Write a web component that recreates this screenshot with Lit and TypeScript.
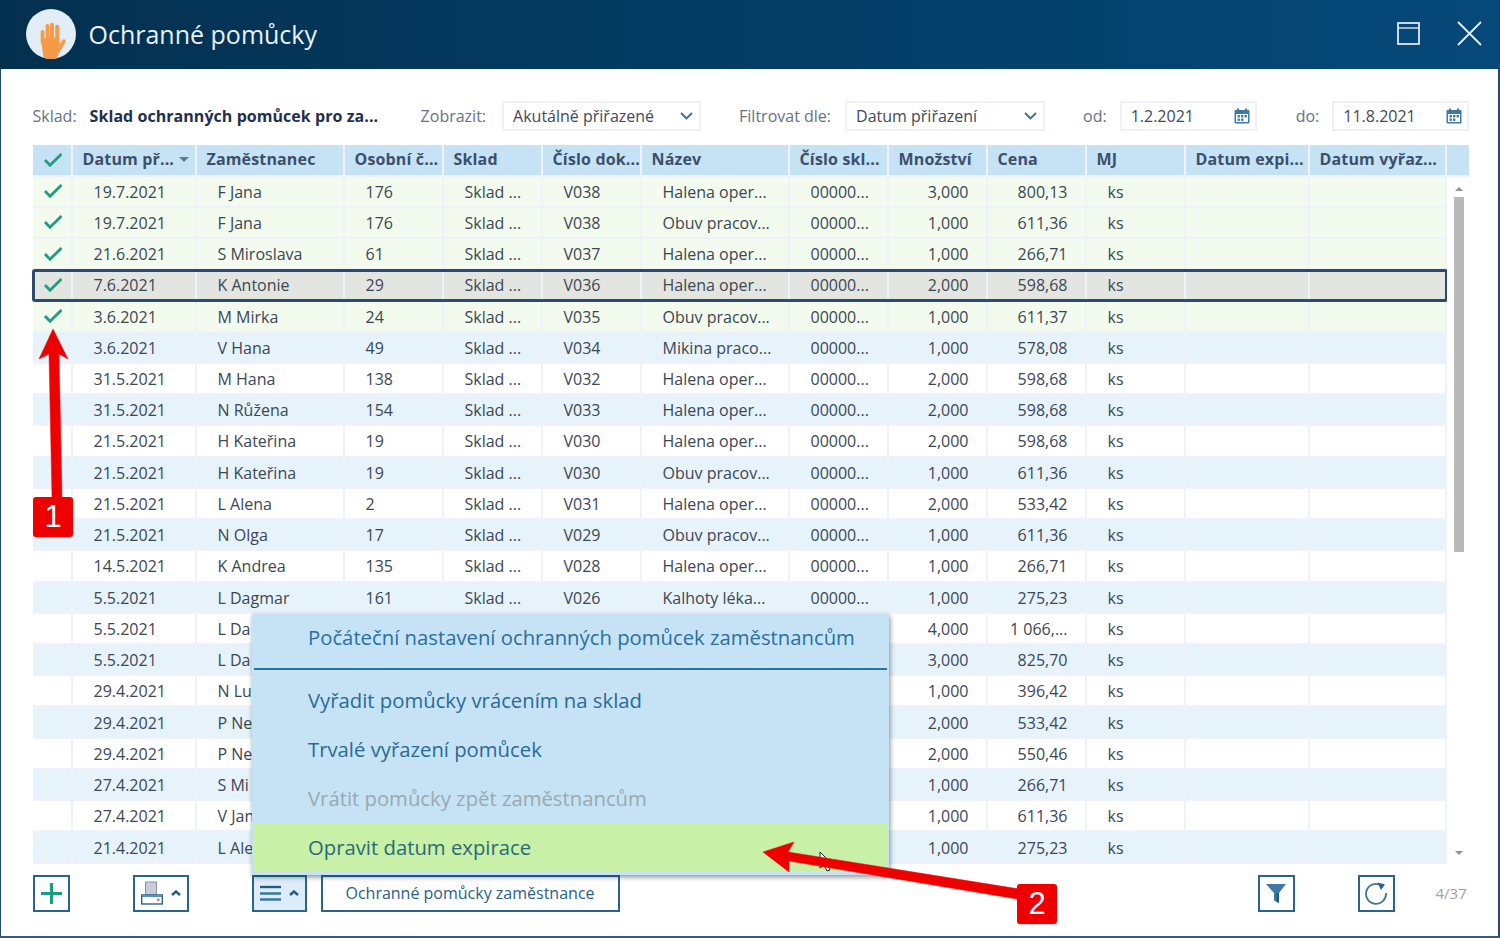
import { LitElement, html, css, svg } from "lit";
import { customElement } from "lit/decorators.js";

type Row = [string, string, string, string, string, string, string, string, string];
const rows: Row[] = [
  ["19.7.2021","F Jana","176","V038","Halena oper...","00000...","3,000","800,13","g"],
  ["19.7.2021","F Jana","176","V038","Obuv pracov...","00000...","1,000","611,36","g"],
  ["21.6.2021","S Miroslava","61","V037","Halena oper...","00000...","1,000","266,71","g"],
  ["7.6.2021","K Antonie","29","V036","Halena oper...","00000...","2,000","598,68","s"],
  ["3.6.2021","M Mirka","24","V035","Obuv pracov...","00000...","1,000","611,37","g"],
  ["3.6.2021","V Hana","49","V034","Mikina praco...","00000...","1,000","578,08","b"],
  ["31.5.2021","M Hana","138","V032","Halena oper...","00000...","2,000","598,68","w"],
  ["31.5.2021","N Růžena","154","V033","Halena oper...","00000...","2,000","598,68","b"],
  ["21.5.2021","H Kateřina","19","V030","Halena oper...","00000...","2,000","598,68","w"],
  ["21.5.2021","H Kateřina","19","V030","Obuv pracov...","00000...","1,000","611,36","b"],
  ["21.5.2021","L Alena","2","V031","Halena oper...","00000...","2,000","533,42","w"],
  ["21.5.2021","N Olga","17","V029","Obuv pracov...","00000...","1,000","611,36","b"],
  ["14.5.2021","K Andrea","135","V028","Halena oper...","00000...","1,000","266,71","w"],
  ["5.5.2021","L Dagmar","161","V026","Kalhoty léka...","00000...","1,000","275,23","b"],
  ["5.5.2021","L Da","","","","","4,000","1 066,...","w"],
  ["5.5.2021","L Da","","","","","3,000","825,70","b"],
  ["29.4.2021","N Lu","","","","","1,000","396,42","w"],
  ["29.4.2021","P Ne","","","","","2,000","533,42","b"],
  ["29.4.2021","P Ne","","","","","2,000","550,46","w"],
  ["27.4.2021","S Mi","","","","","1,000","266,71","b"],
  ["27.4.2021","V Jan","","","","","1,000","611,36","w"],
  ["21.4.2021","L Ale","","","","","1,000","275,23","b"],
];
const heads = ["Zaměstnanec","Osobní č...","Sklad","Číslo dok...","Název","Číslo skl...","Množství","Cena","MJ","Datum expi...","Datum vyřaz..."];

const check = () => html`<svg class="chk" width="20" height="16" viewBox="0 0 20 16"><path d="M3 8 L8 13.2 L19.5 2" fill="none" stroke="#1f9f82" stroke-width="2.8"/></svg>`;
const cal = html`<svg class="cal" width="16" height="16" viewBox="0 0 16 16"><rect x="0.5" y="2" width="15" height="13.5" rx="1" fill="#3f79a6"/><rect x="3" y="0.5" width="2" height="3" fill="#3f79a6"/><rect x="11" y="0.5" width="2" height="3" fill="#3f79a6"/><rect x="2" y="6" width="12" height="8" fill="#fff"/><g fill="#3f79a6"><rect x="3.5" y="7" width="2.4" height="2.4"/><rect x="7" y="7" width="2.4" height="2.4"/><rect x="10.5" y="7" width="2.4" height="2.4"/><rect x="3.5" y="10.5" width="2.4" height="2.4"/><rect x="7" y="10.5" width="2.4" height="2.4"/></g></svg>`;
const chev = html`<svg width="13" height="8" viewBox="0 0 13 8"><path d="M1 1 L6.5 6.5 L12 1" fill="none" stroke="#3b6c95" stroke-width="1.8"/></svg>`;
const caretUp = html`<svg width="10" height="6" viewBox="0 0 10 6"><path d="M1 5 L5 1.5 L9 5" fill="none" stroke="#1f5c86" stroke-width="2.4"/></svg>`;

@customElement("app-root")
export class AppRoot extends LitElement {
  static styles = css`
    :host { display: block; width: 1500px; height: 938px; position: relative; overflow: hidden; font-family: "Open Sans", sans-serif; color: #3c4753; background: #fff; }
    .win { width: 1500px; height: 938px; box-sizing: border-box; border-left: 1.5px solid #1f4b6e; border-right: 2px solid #1f4b6e; border-bottom: 2px solid #2f5f80; display: flex; flex-direction: column; background: #fff; }
    .head { height: 69px; box-sizing: border-box; padding-bottom: 2px; flex: none; margin: 0 -2px 0 -1.5px; background: linear-gradient(90deg, #03304f, #05497a); display: flex; align-items: center; padding-left: 26px; color: #e8f1f8; }
    .logo { width: 50px; height: 50px; flex: none; display: block; }
    .title { font-size: 25px; margin-left: 13px; flex: 1; }
    .winbtn { display: block; flex: none; }
    .max { margin-right: 37px; }
    .close { margin-right: 18px; }
    .filters { display: flex; align-items: center; height: 30px; margin: 31.5px 0 14.5px 31.5px; font-size: 16px; color: #667382; white-space: nowrap; }
    .store { font-weight: 700; color: #1f2f4d; margin-left: 13px; width: 331px; letter-spacing: .05px; }
    .field { box-sizing: border-box; height: 30px; border: 2px solid #eef1fa; display: flex; align-items: center; justify-content: space-between; color: #3f4a57; padding: 0 6px 0 9px; }
    .sel1 { width: 199px; margin-left: 16px; margin-right: 38px; }
    .sel2 { width: 200px; margin-left: 14px; margin-right: 38px; }
    .date { width: 137px; margin-left: 13px; padding-right: 5px; }
    .lbl2 { margin-left: 39px; }
    .table { margin-left: 31.5px; width: 1436px; flex: none; position: relative; }
    .row { display: grid; grid-template-columns: 40px 124px 148px 99px 99px 99px 148px 99px 99px 99px 99px 124px 137px 22px; height: 31.24px; }
    .hdr { height: 31.5px; background: #c5e3f5; font-weight: 700; color: #3d4f6b; }
    .cell { box-sizing: border-box; border-right: 2px solid #eff2fb; border-bottom: 2px solid #eff2fb; display: flex; align-items: center; padding-left: 21px; padding-top: 1px; white-space: nowrap; overflow: hidden; font-size: 16px; }
    .hdr .cell { padding-left: 10px; padding-top: 0; padding-bottom: 1px; justify-content: flex-start; letter-spacing: .15px; }
    .hdr .end { border-right: 0; }
    .cc, .hdr .cc { padding: 0 0 0 1px; justify-content: center; }
    .num { justify-content: flex-end; padding-left: 0; padding-right: 17px; }
    .cap { margin-left: 5px; width: 0; height: 0; border-left: 5.5px solid transparent; border-right: 5.5px solid transparent; border-top: 5px solid #6b7684; }
    .g { background: #f2fbee; }
    .b { background: #e6f3fb; }
    .w { background: #fff; }
    .s { background: #e3e5e1; outline: 3px solid #2c4a69; outline-offset: -2px; border-radius: 2px; position: relative; z-index: 1; width: 1414px; }
    .scroll { position: absolute; right: 0; top: 31.5px; bottom: 0; width: 22px; background: #fff; display: flex; flex-direction: column; align-items: center; z-index: 2; }
    .sarrow { width: 0; height: 0; border-left: 4px solid transparent; border-right: 4px solid transparent; margin-top: 10px; border-bottom: 4px solid #8f9298; margin-left: 3px; }
    .thumb { width: 10px; height: 355px; background: #b9b9b9; margin-top: 6px; margin-left: 3px; }
    .sarrow.dn { margin-top: auto; margin-bottom: 9px; border-bottom: 0; border-top: 4px solid #8f9298; }
    .foot { display: flex; align-items: center; height: 37px; margin: 11.2px 0 0 31.5px; color: #2a6a96; }
    .btn { box-sizing: border-box; height: 37px; border: 2px solid #27658f; background: #fff; display: flex; align-items: center; justify-content: center; flex: none; }
    .b1 { width: 37px; }
    .b2 { width: 56px; margin-left: 63px; gap: 8px; }
    .b3 { width: 55px; margin-left: 63px; gap: 8px; background: #dcedf9; }
    .b4 { width: 299px; margin-left: 14px; font-size: 16px; color: #2a6088; }
    .b5 { width: 37px; margin-left: 638px; }
    .b6 { width: 37px; margin-left: 63px; }
    .count { margin-left: 41px; font-size: 15px; color: #a09f9c; }
    .menu { position: absolute; left: 252px; top: 614px; width: 637px; height: 261px; box-sizing: border-box; background: #c5e3f5; padding: 0 2px; box-shadow: 1px 2px 5px rgba(40,50,60,.55); z-index: 5; font-size: 20.3px; color: #2a6a96; }
    .mi { box-sizing: border-box; height: 49px; display: flex; align-items: center; padding-left: 54px; padding-bottom: 2px; white-space: nowrap; }
    .first { height: 56px; border-bottom: 2px solid #2a6f9f; padding-bottom: 8px; margin-bottom: 6px; color: #2b6f9f; }
    .off { color: #9aa8b2; }
    .on { background: #c8f0a6; height: 47px; margin-top: 1px; color: #2a6a78; }
    .overlay { position: absolute; left: 0; top: 0; z-index: 6; pointer-events: none; }
    .badge { position: absolute; width: 40px; height: 40px; background: #ee0000; border-radius: 3px; color: #fff; font-family: "Liberation Sans", sans-serif; font-size: 31px; display: flex; align-items: center; justify-content: center; z-index: 7; box-shadow: 0 1px 1px rgba(0,0,0,.15); }
    .n1 { left: 33px; top: 497px; }
    .n2 { left: 1017px; top: 884px; }
    .chk { display: block; }
  `;

  render() {
    return html`
      <div class="win">
        <div class="head">
          <svg class="logo" viewBox="0 0 50 50">
            <defs><clipPath id="c"><circle cx="25" cy="25" r="25"/></clipPath></defs>
            <circle cx="25" cy="25" r="25" fill="#e3edf6"/>
            <g clip-path="url(#c)" fill="#f59a46">
              <rect x="14.7" y="21" width="3.8" height="14" rx="1.9"/>
              <rect x="19.6" y="15" width="3.8" height="18" rx="1.9"/>
              <rect x="24" y="13.7" width="4" height="18" rx="2"/>
              <rect x="29.2" y="15.7" width="4" height="18" rx="2"/>
              <path d="M14.7 29 H33.2 V35 L37 30.5 C38.5 29.5 40.5 31.5 39.7 33 L33 44 L30.7 50 H18 L16.5 42 Z"/>
            </g>
          </svg>
          <div class="title">Ochranné pomůcky</div>
          <svg class="winbtn max" width="23" height="23" viewBox="0 0 23 23"><rect x="1" y="1" width="21" height="21" fill="none" stroke="#dfe9f1" stroke-width="1.8"/><path d="M1 6 H22" stroke="#dfe9f1" stroke-width="1.4"/></svg>
          <svg class="winbtn close" width="25" height="25" viewBox="0 0 25 25"><path d="M1 1 L24 24 M24 1 L1 24" stroke="#e4edf4" stroke-width="1.8"/></svg>
        </div>

        <div class="filters">
          <span>Sklad:</span><span class="store">Sklad ochranných pomůcek pro za...</span>
          <span>Zobrazit:</span>
          <div class="field sel1"><span>Akutálně přiřazené</span>${chev}</div>
          <span>Filtrovat dle:</span>
          <div class="field sel2"><span>Datum přiřazení</span>${chev}</div>
          <span>od:</span>
          <div class="field date"><span>1.2.2021</span>${cal}</div>
          <span class="lbl2">do:</span>
          <div class="field date"><span>11.8.2021</span>${cal}</div>
        </div>

        <div class="table">
          <div class="row hdr">
            <div class="cell cc">${check()}</div>
            <div class="cell">Datum př...<span class="cap"></span></div>
            ${heads.map((h) => html`<div class="cell">${h}</div>`)}
            <div class="cell end"></div>
          </div>
          ${rows.map((r) => html`
            <div class="row ${r[8]}">
              <div class="cell cc">${r[8] === "g" || r[8] === "s" ? check() : ""}</div>
              <div class="cell">${r[0]}</div>
              <div class="cell">${r[1]}</div>
              <div class="cell">${r[2]}</div>
              <div class="cell">${r[3] ? "Sklad ..." : ""}</div>
              <div class="cell">${r[3]}</div>
              <div class="cell">${r[4]}</div>
              <div class="cell">${r[5]}</div>
              <div class="cell num">${r[6]}</div>
              <div class="cell num">${r[7]}</div>
              <div class="cell">ks</div>
              <div class="cell"></div>
              <div class="cell"></div>
            </div>`)}
          <div class="scroll">
            <div class="sarrow"></div>
            <div class="thumb"></div>
            <div class="sarrow dn"></div>
          </div>
        </div>

        <div class="foot">
          <div class="btn b1"><svg width="23" height="23" viewBox="0 0 23 23"><path d="M11.5 1 V22 M1 11.5 H22" stroke="#1a9c80" stroke-width="3.2"/></svg></div>
          <div class="btn b2">
            <svg width="22" height="24" viewBox="0 0 22 24"><rect x="4.5" y="1" width="11" height="13" fill="#c9ccd2" stroke="#8a93a5"/><rect x="0.7" y="14" width="20.6" height="9" fill="#fff" stroke="#27658f" stroke-width="1.4"/><rect x="1" y="14" width="20" height="2" fill="#5b8fb5"/><rect x="16" y="17.5" width="2.5" height="2.5" fill="#e8706a"/></svg>
            ${caretUp}
          </div>
          <div class="btn b3">
            <svg width="21" height="17" viewBox="0 0 21 17"><path d="M0 2 H21" stroke="#1f5c86" stroke-width="2.4"/><path d="M0 8.5 H21 M0 14.5 H21" stroke="#3a779f" stroke-width="2.4"/></svg>
            ${caretUp}
          </div>
          <div class="btn b4">Ochranné pomůcky zaměstnance</div>
          <div class="btn b5"><svg width="22" height="22" viewBox="0 0 22 22"><path d="M1 2 H21 L14 11 V21 L9 18.5 V11 Z" fill="#3f79a6"/><path d="M14 11 V21 L11.5 19.7 V11 Z" fill="#1f5c86"/></svg></div>
          <div class="btn b6"><svg width="24" height="24" viewBox="0 0 24 24"><path d="M17.5 4.5 A10 10 0 1 0 22 12" fill="none" stroke="#3a779f" stroke-width="1.8"/><path d="M13.5 1.5 L21 3.5 L17 9 Z" fill="#27658f"/></svg></div>
          <div class="count">4/37</div>
        </div>
      </div>

      <div class="menu">
        <div class="mi first">Počáteční nastavení ochranných pomůcek zaměstnancům</div>
        <div class="mi">Vyřadit pomůcky vrácením na sklad</div>
        <div class="mi">Trvalé vyřazení pomůcek</div>
        <div class="mi off">Vrátit pomůcky zpět zaměstnancům</div>
        <div class="mi on">Opravit datum expirace</div>
      </div>

      <svg class="overlay" width="1500" height="938" viewBox="0 0 1500 938">
        ${svg`
          <path d="M820 852 V868 L824 865 L827 871 L830 870 L827 864 L831 863 Z" fill="#fff" stroke="#222" stroke-width="1"/>
          <path d="M53 329 L68 359 L59 354 L62 497 L52 497 L49 354 L39 359 Z" fill="#ee0000" stroke="#ee0000" stroke-width=".5"/>
          <path d="M763 852 L794 842 L788 852 L1019 889 L1017 899 L789 861 L789 872 Z" fill="#ee0000" stroke="#ee0000" stroke-width=".5"/>
        `}
      </svg>
      <div class="badge n1">1</div>
      <div class="badge n2">2</div>
    `;
  }
}
